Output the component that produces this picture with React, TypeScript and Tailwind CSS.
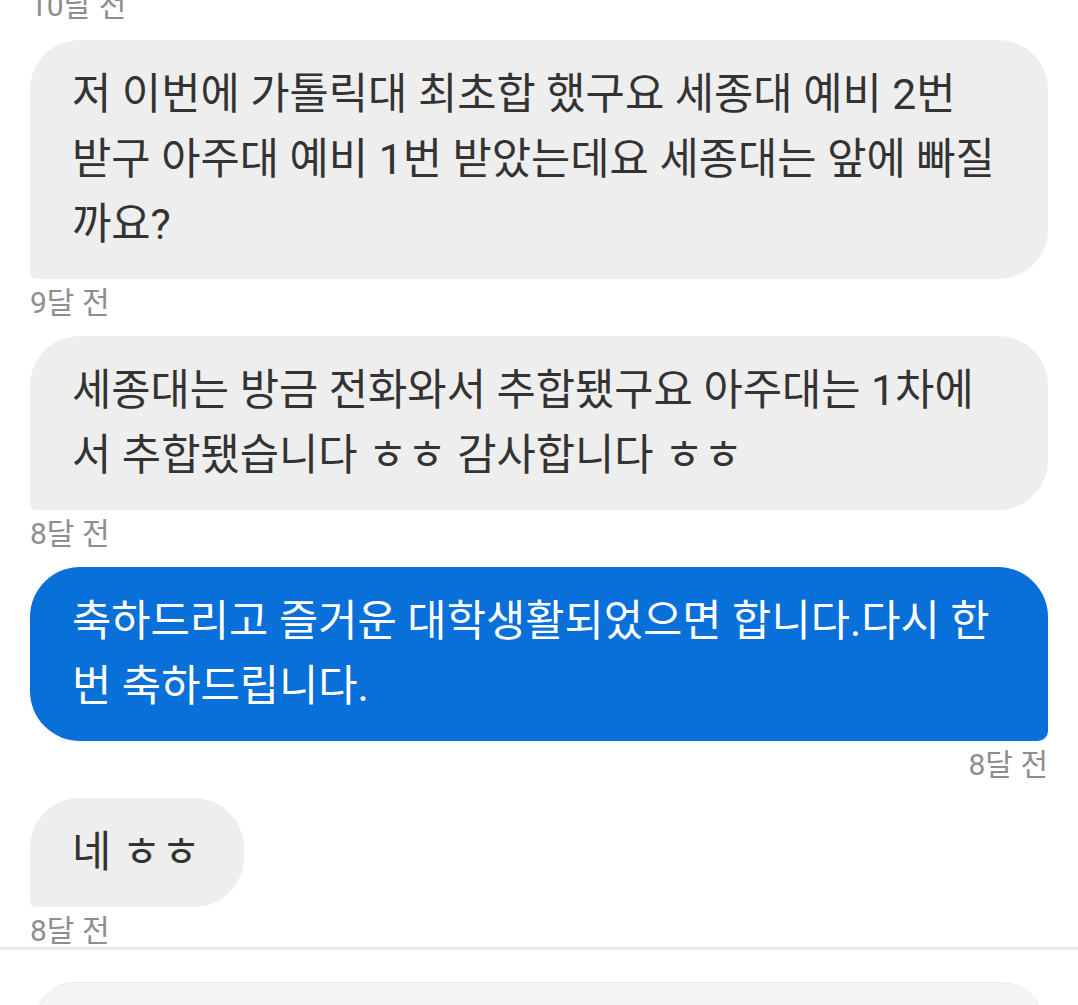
import React from 'react';

type Msg = {
  id: number;
  lines: string[];
  mine?: boolean;
  time: string;
  fit?: boolean;
};

const messages: Msg[] = [
  {
    id: 1,
    lines: [
      '저 이번에 가톨릭대 최초합 했구요 세종대 예비 2번',
      '받구 아주대 예비 1번 받았는데요 세종대는 앞에 빠질',
      '까요?',
    ],
    time: '9달 전',
  },
  {
    id: 2,
    lines: ['세종대는 방금 전화와서 추합됐구요 아주대는 1차에', '서 추합됐습니다 ㅎㅎ 감사합니다 ㅎㅎ'],
    time: '8달 전',
  },
  {
    id: 3,
    lines: ['축하드리고 즐거운 대학생활되었으면 합니다.다시 한', '번 축하드립니다.'],
    mine: true,
    time: '8달 전',
  },
  {
    id: 4,
    lines: ['네 ㅎㅎ'],
    time: '8달 전',
    fit: true,
  },
];

const font = { fontFamily: 'Roboto, "Noto Sans CJK KR", "Noto Sans", sans-serif' };

const Bubble: React.FC<{ msg: Msg; last: boolean }> = ({ msg, last }) => {
  return (
    <div className={msg.mine ? 'flex flex-col items-end' : 'flex flex-col items-start'}>
      <div
        className={
          (msg.mine
            ? 'bg-[#0870d8] text-white rounded-[50px] rounded-br-[10px] w-full'
            : 'bg-[#eeeeee] text-[#333333] rounded-[50px] rounded-bl-[6px] ' + (msg.fit ? '' : 'w-full')) +
          ' pl-[42px] pr-[44px] py-[22px] text-[42.7px] leading-[65px] whitespace-nowrap'
        }
      >
        {msg.lines.map((l, i) => (
          <div key={i}>{l}</div>
        ))}
      </div>
      <div
        className={
          'text-[30px] leading-[48px] text-[#8e8e8e] ' + (last ? 'h-[40px]' : 'h-[46px] mb-[11px]')
        }
      >
        {msg.time}
      </div>
    </div>
  );
};

export default function App() {
  return (
    <div className="w-[1078px] h-[1005px] overflow-hidden bg-white" style={font}>
      <div className="px-[30px]">
        <div className="-mt-[18px] h-[46px] mb-[12px] text-[30px] leading-[48px] text-[#8e8e8e]">10달 전</div>
        {messages.map((m, i) => (
          <Bubble key={m.id} msg={m} last={i === messages.length - 1} />
        ))}
      </div>
      <div className="h-[3px] bg-[#ececec]" />
      <div className="px-[35px] pt-[32px]">
        <div className="h-[90px] rounded-[40px] bg-[#f5f5f5] border border-[#ebebeb]" />
      </div>
    </div>
  );
}
